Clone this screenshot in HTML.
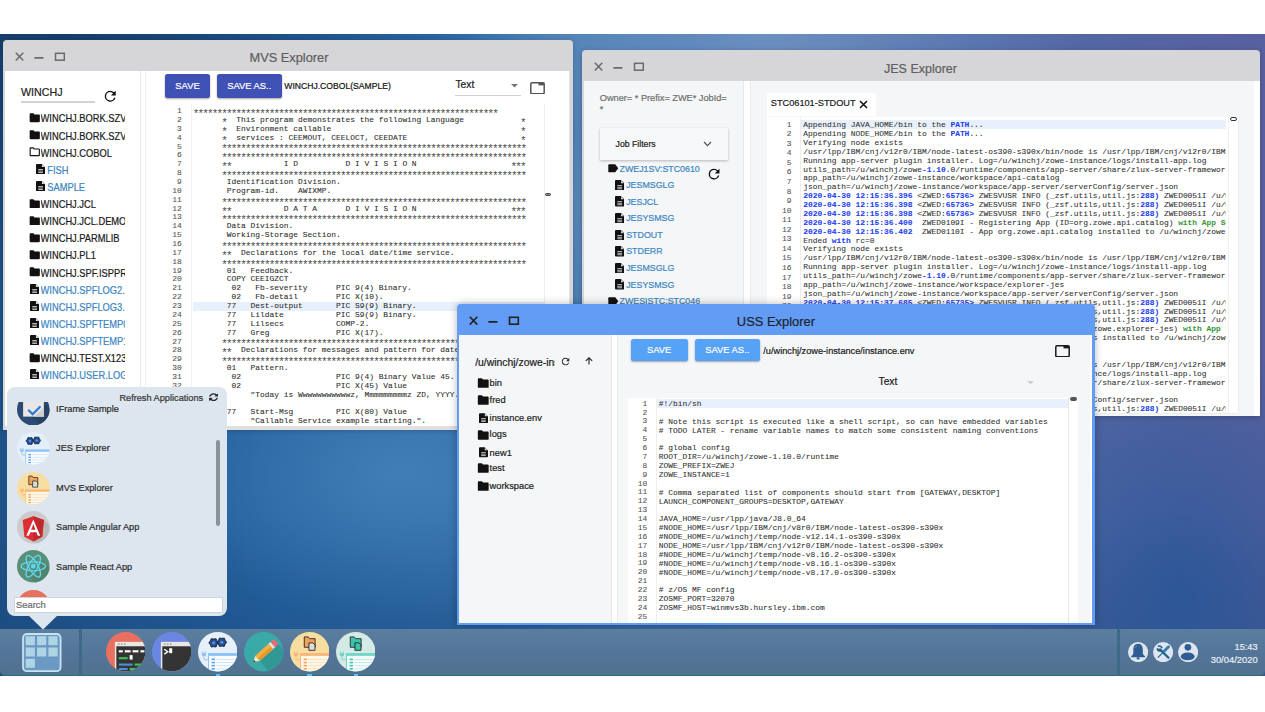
<!DOCTYPE html><html><head><meta charset="utf-8"><style>
*{box-sizing:border-box;margin:0;padding:0}
html,body{width:1265px;height:712px;overflow:hidden;background:#fff}
body{position:relative;font-family:"Liberation Sans",sans-serif;color:#111;-webkit-text-stroke:0.2px currentColor}
.mono{-webkit-text-stroke:0.08px currentColor}
.a{position:absolute}
.ov{overflow:hidden}
.mono{font-family:"Liberation Mono",monospace;white-space:pre}
.nw{white-space:nowrap}
.ast{display:inline-block;height:8.86px;vertical-align:top;font-size:11px;letter-spacing:-1.848px;position:relative;top:2.9px;left:-0.92px;font-weight:normal;color:#4a4a4a;-webkit-text-stroke:0}
.cd{-webkit-text-stroke:0.18px currentColor}
</style></head><body><div class="a ov" style="left:0;top:34px;width:1265px;height:642px;background:
radial-gradient(ellipse 200px 260px at 1180px 560px, rgba(35,85,150,0.75), rgba(35,85,150,0) 100%),
radial-gradient(ellipse 260px 150px at 400px 440px, rgba(85,145,198,0.55), rgba(85,145,198,0) 100%),
radial-gradient(ellipse 130px 330px at 578px 160px, rgba(120,160,200,0.45), rgba(120,160,200,0) 100%),
linear-gradient(180deg, rgba(20,60,110,0) 75%, rgba(20,60,110,0.35) 100%),
radial-gradient(ellipse 330px 120px at 760px 0px, rgba(140,175,215,0.45), rgba(140,175,215,0) 100%),
radial-gradient(ellipse 420px 260px at 60px 0px, rgba(20,55,100,0.85), rgba(20,55,100,0) 100%),
linear-gradient(90deg,#1f5288 0%,#2462a0 22%,#2f6aa5 40%,#4574ad 52%,#5276ad 62%,#5169a6 80%,#58609f 100%)">
</div>
<div class="a ov" style="left:3px;top:40px;width:570px;height:390px;background:#d6d6d9;border-radius:4px 4px 0 0;box-shadow:0 1px 4px rgba(0,0,0,.18)">
<svg class="a" style="left:0;top:0" width="70" height="31" viewBox="0 0 70 31">
<path d="M12.8 12.8 L20.3 20.6 M20.3 12.8 L12.8 20.6" stroke="#6a6a6a" stroke-width="1.5" fill="none"/>
<path d="M31.4 17.9 H40.4" stroke="#6a6a6a" stroke-width="1.7" fill="none"/>
<rect x="52.5" y="13.3" width="8.8" height="6.9" stroke="#6a6a6a" stroke-width="1.5" fill="none"/>
</svg>
<div class="a nw" style="left:0;top:0;width:570px;height:31px;text-align:center;font-size:12.8px;line-height:31px;color:#5e5e5e;padding-top:2.4px;padding-left:2px">MVS Explorer</div>
<div class="a ov" style="left:2px;top:31px;width:564.5px;height:359px;background:#fff;border-right:1px solid #e4e4e4">
<div class="a" style="left:135px;top:0;width:1px;height:357px;background:#e9e9e9"></div>
<div class="a" style="left:140px;top:0;width:1px;height:357px;background:#efefef"></div>
<div class="a nw" style="left:16px;top:14.299999999999997px;font-size:10.7px;line-height:14px;color:#222">WINCHJ</div>
<div class="a" style="left:16px;top:30px;width:74px;height:1.6px;background:#d2d2d2"></div>
<svg class="a" style="left:97.05px;top:17.25px" width="16.5" height="16.5" viewBox="0 0 24 24"><path d="M17.65 6.35A7.958 7.958 0 0 0 12 4a8 8 0 1 0 7.73 10h-2.08A6 6 0 1 1 12 6c1.66 0 3.14.69 4.22 1.78L13 11h7V4l-2.35 2.35z" fill="#111"/></svg>
<svg class="a" style="left:23.9px;top:42.0px" width="11.5" height="9.7" viewBox="0 0 11 9.5"><path d="M0.5 1.2 Q0.5 0.3 1.3 0.3 H4.2 L5.3 1.4 H9.7 Q10.5 1.4 10.5 2.2 V8.2 Q10.5 9 9.7 9 H1.3 Q0.5 9 0.5 8.2 Z" fill="#111"/></svg>
<div class="a ov nw" style="left:35.6px;top:42.39999999999999px;width:84.4px;height:12px;font-size:9.3px;line-height:12px;color:#1a1a1a;transform:scaleY(1.14)">WINCHJ.BORK.SZVIPERS</div>
<svg class="a" style="left:23.9px;top:59.129999999999995px" width="11.5" height="9.7" viewBox="0 0 11 9.5"><path d="M0.5 1.2 Q0.5 0.3 1.3 0.3 H4.2 L5.3 1.4 H9.7 Q10.5 1.4 10.5 2.2 V8.2 Q10.5 9 9.7 9 H1.3 Q0.5 9 0.5 8.2 Z" fill="#111"/></svg>
<div class="a ov nw" style="left:35.6px;top:59.53px;width:84.4px;height:12px;font-size:9.3px;line-height:12px;color:#1a1a1a;transform:scaleY(1.14)">WINCHJ.BORK.SZVIPERS2</div>
<svg class="a" style="left:23.9px;top:76.25999999999999px" width="11.5" height="9.7" viewBox="0 0 11 9.5"><path d="M1 1.2 Q1 0.8 1.4 0.8 H4 L5 1.9 H9.6 Q10 1.9 10 2.3 V8.1 Q10 8.5 9.6 8.5 H1.4 Q1 8.5 1 8.1 Z" fill="none" stroke="#111" stroke-width="1.1"/></svg>
<div class="a ov nw" style="left:35.6px;top:76.66px;width:84.4px;height:12px;font-size:9.3px;line-height:12px;color:#1a1a1a;transform:scaleY(1.14)">WINCHJ.COBOL</div>
<svg class="a" style="left:31.299999999999997px;top:92.69px" width="9.2" height="10.2" viewBox="0 0 9 10"><path d="M1 0 H5.6 L9 3.3 V9 Q9 10 8 10 H1 Q0 10 0 9 V1 Q0 0 1 0 Z" fill="#111"/><path d="M5.8 0.6 V3 H8.3" fill="#fff" opacity="0.9"/><rect x="2.2" y="5" width="4.6" height="0.8" fill="#ddd"/><rect x="2.2" y="6.5" width="4.6" height="0.8" fill="#ddd"/><rect x="2.2" y="8" width="4.6" height="0.8" fill="#ddd"/></svg>
<div class="a ov nw" style="left:42.3px;top:93.78999999999999px;width:77.7px;height:12px;font-size:9.3px;line-height:12px;color:#3d86c2;transform:scaleY(1.14)">FISH</div>
<svg class="a" style="left:31.299999999999997px;top:109.82px" width="9.2" height="10.2" viewBox="0 0 9 10"><path d="M1 0 H5.6 L9 3.3 V9 Q9 10 8 10 H1 Q0 10 0 9 V1 Q0 0 1 0 Z" fill="#111"/><path d="M5.8 0.6 V3 H8.3" fill="#fff" opacity="0.9"/><rect x="2.2" y="5" width="4.6" height="0.8" fill="#ddd"/><rect x="2.2" y="6.5" width="4.6" height="0.8" fill="#ddd"/><rect x="2.2" y="8" width="4.6" height="0.8" fill="#ddd"/></svg>
<div class="a ov nw" style="left:42.3px;top:110.91999999999999px;width:77.7px;height:12px;font-size:9.3px;line-height:12px;color:#3d86c2;transform:scaleY(1.14)">SAMPLE</div>
<svg class="a" style="left:23.9px;top:127.64999999999998px" width="11.5" height="9.7" viewBox="0 0 11 9.5"><path d="M0.5 1.2 Q0.5 0.3 1.3 0.3 H4.2 L5.3 1.4 H9.7 Q10.5 1.4 10.5 2.2 V8.2 Q10.5 9 9.7 9 H1.3 Q0.5 9 0.5 8.2 Z" fill="#111"/></svg>
<div class="a ov nw" style="left:35.6px;top:128.04999999999998px;width:84.4px;height:12px;font-size:9.3px;line-height:12px;color:#1a1a1a;transform:scaleY(1.14)">WINCHJ.JCL</div>
<svg class="a" style="left:23.9px;top:144.77999999999997px" width="11.5" height="9.7" viewBox="0 0 11 9.5"><path d="M0.5 1.2 Q0.5 0.3 1.3 0.3 H4.2 L5.3 1.4 H9.7 Q10.5 1.4 10.5 2.2 V8.2 Q10.5 9 9.7 9 H1.3 Q0.5 9 0.5 8.2 Z" fill="#111"/></svg>
<div class="a ov nw" style="left:35.6px;top:145.17999999999998px;width:84.4px;height:12px;font-size:9.3px;line-height:12px;color:#1a1a1a;transform:scaleY(1.14)">WINCHJ.JCL.DEMOS</div>
<svg class="a" style="left:23.9px;top:161.90999999999997px" width="11.5" height="9.7" viewBox="0 0 11 9.5"><path d="M0.5 1.2 Q0.5 0.3 1.3 0.3 H4.2 L5.3 1.4 H9.7 Q10.5 1.4 10.5 2.2 V8.2 Q10.5 9 9.7 9 H1.3 Q0.5 9 0.5 8.2 Z" fill="#111"/></svg>
<div class="a ov nw" style="left:35.6px;top:162.30999999999997px;width:84.4px;height:12px;font-size:9.3px;line-height:12px;color:#1a1a1a;transform:scaleY(1.14)">WINCHJ.PARMLIB</div>
<svg class="a" style="left:23.9px;top:179.03999999999996px" width="11.5" height="9.7" viewBox="0 0 11 9.5"><path d="M0.5 1.2 Q0.5 0.3 1.3 0.3 H4.2 L5.3 1.4 H9.7 Q10.5 1.4 10.5 2.2 V8.2 Q10.5 9 9.7 9 H1.3 Q0.5 9 0.5 8.2 Z" fill="#111"/></svg>
<div class="a ov nw" style="left:35.6px;top:179.43999999999997px;width:84.4px;height:12px;font-size:9.3px;line-height:12px;color:#1a1a1a;transform:scaleY(1.14)">WINCHJ.PL1</div>
<svg class="a" style="left:23.9px;top:196.16999999999996px" width="11.5" height="9.7" viewBox="0 0 11 9.5"><path d="M0.5 1.2 Q0.5 0.3 1.3 0.3 H4.2 L5.3 1.4 H9.7 Q10.5 1.4 10.5 2.2 V8.2 Q10.5 9 9.7 9 H1.3 Q0.5 9 0.5 8.2 Z" fill="#111"/></svg>
<div class="a ov nw" style="left:35.6px;top:196.57px;width:84.4px;height:12px;font-size:9.3px;line-height:12px;color:#1a1a1a;transform:scaleY(1.14)">WINCHJ.SPF.ISPPROF</div>
<svg class="a" style="left:24.8px;top:212.59999999999997px" width="9.2" height="10.2" viewBox="0 0 9 10"><path d="M1 0 H5.6 L9 3.3 V9 Q9 10 8 10 H1 Q0 10 0 9 V1 Q0 0 1 0 Z" fill="#111"/><path d="M5.8 0.6 V3 H8.3" fill="#fff" opacity="0.9"/><rect x="2.2" y="5" width="4.6" height="0.8" fill="#ddd"/><rect x="2.2" y="6.5" width="4.6" height="0.8" fill="#ddd"/><rect x="2.2" y="8" width="4.6" height="0.8" fill="#ddd"/></svg>
<div class="a ov nw" style="left:35.6px;top:213.7px;width:84.4px;height:12px;font-size:9.3px;line-height:12px;color:#3d86c2;transform:scaleY(1.14)">WINCHJ.SPFLOG2.LIST</div>
<svg class="a" style="left:24.8px;top:229.72999999999996px" width="9.2" height="10.2" viewBox="0 0 9 10"><path d="M1 0 H5.6 L9 3.3 V9 Q9 10 8 10 H1 Q0 10 0 9 V1 Q0 0 1 0 Z" fill="#111"/><path d="M5.8 0.6 V3 H8.3" fill="#fff" opacity="0.9"/><rect x="2.2" y="5" width="4.6" height="0.8" fill="#ddd"/><rect x="2.2" y="6.5" width="4.6" height="0.8" fill="#ddd"/><rect x="2.2" y="8" width="4.6" height="0.8" fill="#ddd"/></svg>
<div class="a ov nw" style="left:35.6px;top:230.82999999999998px;width:84.4px;height:12px;font-size:9.3px;line-height:12px;color:#3d86c2;transform:scaleY(1.14)">WINCHJ.SPFLOG3.LIST</div>
<svg class="a" style="left:24.8px;top:246.86px" width="9.2" height="10.2" viewBox="0 0 9 10"><path d="M1 0 H5.6 L9 3.3 V9 Q9 10 8 10 H1 Q0 10 0 9 V1 Q0 0 1 0 Z" fill="#111"/><path d="M5.8 0.6 V3 H8.3" fill="#fff" opacity="0.9"/><rect x="2.2" y="5" width="4.6" height="0.8" fill="#ddd"/><rect x="2.2" y="6.5" width="4.6" height="0.8" fill="#ddd"/><rect x="2.2" y="8" width="4.6" height="0.8" fill="#ddd"/></svg>
<div class="a ov nw" style="left:35.6px;top:247.96000000000004px;width:84.4px;height:12px;font-size:9.3px;line-height:12px;color:#3d86c2;transform:scaleY(1.14)">WINCHJ.SPFTEMP0.CNTL</div>
<svg class="a" style="left:24.8px;top:263.99px" width="9.2" height="10.2" viewBox="0 0 9 10"><path d="M1 0 H5.6 L9 3.3 V9 Q9 10 8 10 H1 Q0 10 0 9 V1 Q0 0 1 0 Z" fill="#111"/><path d="M5.8 0.6 V3 H8.3" fill="#fff" opacity="0.9"/><rect x="2.2" y="5" width="4.6" height="0.8" fill="#ddd"/><rect x="2.2" y="6.5" width="4.6" height="0.8" fill="#ddd"/><rect x="2.2" y="8" width="4.6" height="0.8" fill="#ddd"/></svg>
<div class="a ov nw" style="left:35.6px;top:265.09000000000003px;width:84.4px;height:12px;font-size:9.3px;line-height:12px;color:#3d86c2;transform:scaleY(1.14)">WINCHJ.SPFTEMP1.CNTL</div>
<svg class="a" style="left:23.9px;top:281.82px" width="11.5" height="9.7" viewBox="0 0 11 9.5"><path d="M0.5 1.2 Q0.5 0.3 1.3 0.3 H4.2 L5.3 1.4 H9.7 Q10.5 1.4 10.5 2.2 V8.2 Q10.5 9 9.7 9 H1.3 Q0.5 9 0.5 8.2 Z" fill="#111"/></svg>
<div class="a ov nw" style="left:35.6px;top:282.22px;width:84.4px;height:12px;font-size:9.3px;line-height:12px;color:#1a1a1a;transform:scaleY(1.14)">WINCHJ.TEST.X123</div>
<svg class="a" style="left:24.8px;top:298.25px" width="9.2" height="10.2" viewBox="0 0 9 10"><path d="M1 0 H5.6 L9 3.3 V9 Q9 10 8 10 H1 Q0 10 0 9 V1 Q0 0 1 0 Z" fill="#111"/><path d="M5.8 0.6 V3 H8.3" fill="#fff" opacity="0.9"/><rect x="2.2" y="5" width="4.6" height="0.8" fill="#ddd"/><rect x="2.2" y="6.5" width="4.6" height="0.8" fill="#ddd"/><rect x="2.2" y="8" width="4.6" height="0.8" fill="#ddd"/></svg>
<div class="a ov nw" style="left:35.6px;top:299.35px;width:84.4px;height:12px;font-size:9.3px;line-height:12px;color:#3d86c2;transform:scaleY(1.14)">WINCHJ.USER.LOG</div>
<div class="a nw" style="left:160px;top:3.200000000000003px;width:45px;height:23.4px;background:#3f51b5;border-radius:2.5px;box-shadow:0 1px 2px rgba(0,0,0,.35);color:#fff;font-size:9.4px;line-height:23.4px;text-align:center">SAVE</div>
<div class="a nw" style="left:211.7px;top:3.200000000000003px;width:65px;height:23.4px;background:#3f51b5;border-radius:2.5px;box-shadow:0 1px 2px rgba(0,0,0,.35);color:#fff;font-size:9.4px;line-height:23.4px;text-align:center">SAVE AS..</div>
<div class="a nw" style="left:279.3px;top:9px;font-size:8.6px;line-height:12px;color:#111">WINCHJ.COBOL(SAMPLE)</div>
<div class="a nw" style="left:450.4px;top:7px;font-size:10.3px;line-height:13px;color:#222">Text</div>
<div class="a" style="left:450.4px;top:24.299999999999997px;width:66px;height:1.2px;background:#d2d2d2"></div>
<svg class="a" style="left:505.5px;top:12.799999999999997px" width="7" height="4" viewBox="0 0 7 4"><path d="M0 0 H7 L3.5 3.5Z" fill="#777"/></svg>
<svg class="a" style="left:525px;top:10.5px" width="15" height="12.5" viewBox="0 0 15 12.5"><rect x="0.8" y="0.8" width="13.4" height="10.9" rx="1.2" fill="none" stroke="#555" stroke-width="1.5"/><rect x="8.5" y="0.8" width="5.7" height="2.6" fill="#555"/></svg>
<div class="a" style="left:538.8px;top:32.5px;width:1px;height:330px;background:#ececec"></div>
<div class="a" style="left:186.2px;top:32.5px;width:1px;height:330px;background:#f0f0f0"></div>
<div class="a" style="left:540px;top:122px;width:6.4px;height:3.2px;border:1.1px solid #3a3d42;background:#8c929a;border-radius:2px"></div>
<div class="a" style="left:187.7px;top:231.08999999999997px;width:351.09999999999997px;height:8.86px;background:#e8f0fb"></div>
<div class="a ov" style="left:188.6px;top:36.16999999999999px;width:350.19999999999993px;height:318.4px"><div class="mono" style="font-size:7.92px;line-height:8.86px;color:#2e2e2e"><span class="ast">****************************************************************</span>
      <span class="ast">*</span>  This program demonstrates the following Language            <span class="ast">*</span>
      <span class="ast">*</span>  Environment callable                                        <span class="ast">*</span>
      <span class="ast">*</span>  services : CEEMOUT, CEELOCT, CEEDATE                        <span class="ast">*</span>
      <span class="ast">****************************************************************</span>
      <span class="ast">****************************************************************</span>
      <span class="ast">**</span>           I D          D I V I S I O N                    <span class="ast">***</span>
      <span class="ast">****************************************************************</span>
       Identification Division.
       Program-id.    AWIXMP.
      <span class="ast">****************************************************************</span>
      <span class="ast">**</span>           D A T A      D I V I S I O N                    <span class="ast">***</span>
      <span class="ast">****************************************************************</span>
       Data Division.
       Working-Storage Section.
      <span class="ast">****************************************************************</span>
      <span class="ast">**</span>  Declarations for the local date/time service.
      <span class="ast">****************************************************************</span>
       01   Feedback.
       COPY CEEIGZCT
        02   Fb-severity      PIC 9(4) Binary.
        02   Fb-detail        PIC X(10).
       77   Dest-output       PIC S9(9) Binary.
       77   Lildate           PIC S9(9) Binary.
       77   Lilsecs           COMP-2.
       77   Greg              PIC X(17).
      <span class="ast">****************************************************************</span>
      <span class="ast">**</span>  Declarations for messages and pattern for date formatting.
      <span class="ast">****************************************************************</span>
       01   Pattern.
        02                    PIC 9(4) Binary Value 45.
        02                    PIC X(45) Value
            "Today is Wwwwwwwwwwwz, Mmmmmmmmmz ZD, YYYY."

       77   Start-Msg         PIC X(80) Value
            "Callable Service example starting.".

       77   Stop-Msg          PIC X(80) Value</div></div>
<div class="a mono" style="left:155px;top:36.16999999999999px;width:21.80000000000001px;text-align:right;font-size:7.92px;line-height:8.86px;color:#555">1
2
3
4
5
6
7
8
9
10
11
12
13
14
15
16
17
18
19
20
21
22
23
24
25
26
27
28
29
30
31
32
33
34
35
36
37
38</div>
<div class="a" style="left:0;top:355px;width:566.5px;height:4px;background:#e0e0e0"></div>
</div>
</div>
<div class="a ov" style="left:582px;top:50px;width:678px;height:366px;background:#d6d6d9;border-radius:4px 4px 0 0;box-shadow:0 1px 5px rgba(0,0,0,.22)">
<svg class="a" style="left:0;top:0" width="70" height="31" viewBox="0 0 70 31">
<path d="M12.8 12.8 L20.3 20.6 M20.3 12.8 L12.8 20.6" stroke="#6a6a6a" stroke-width="1.5" fill="none"/>
<path d="M31.4 17.9 H40.4" stroke="#6a6a6a" stroke-width="1.7" fill="none"/>
<rect x="52.5" y="13.3" width="8.8" height="6.9" stroke="#6a6a6a" stroke-width="1.5" fill="none"/>
</svg>
<div class="a nw" style="left:0;top:0;width:678px;height:31px;text-align:center;font-size:12.5px;line-height:31px;color:#5e5e5e;padding-top:3.6px;padding-right:1px">JES Explorer</div>
<div class="a ov" style="left:1.5px;top:31px;width:676.0px;height:335px;background:#fff">
<div class="a" style="left:0;top:0;width:160.5px;height:400px;background:#f4f6f7"></div>
<div class="a" style="left:166.5px;top:0;width:504px;height:400px;background:#f4f6f7"></div>
<div class="a" style="left:159.79999999999995px;top:0;width:1px;height:400px;background:#e6e7e8"></div>
<div class="a" style="left:166.79999999999995px;top:0;width:1px;height:400px;background:#e9eaeb"></div>
<div class="a nw" style="left:16.299999999999955px;top:10.900000000000006px;font-size:9.2px;line-height:12px;color:#707070">Owner= * Prefix= ZWE* JobId=</div>
<div class="a nw" style="left:16.299999999999955px;top:22.200000000000003px;font-size:9.2px;line-height:12px;color:#707070">*</div>
<div class="a" style="left:16.299999999999955px;top:46.8px;width:128.5px;height:32px;background:#f7f8f9;box-shadow:0 1px 2.5px rgba(0,0,0,.26)"></div>
<div class="a nw" style="left:32.10000000000002px;top:56.599999999999994px;font-size:8.7px;line-height:12px;color:#222">Job Filters</div>
<svg class="a" style="left:119.0px;top:60px" width="9" height="6" viewBox="0 0 9 6"><path d="M1 1 L4.5 4.6 L8 1" stroke="#555" stroke-width="1.3" fill="none"/></svg>
<svg class="a" style="left:24.700000000000045px;top:83.30000000000001px" width="11" height="9" viewBox="0 0 11 9"><path d="M1.2 0.3 H7.2 L10.3 4.3 L7.2 8.3 H1.2 Q0.3 8.3 0.3 7.4 V1.2 Q0.3 0.3 1.2 0.3Z" fill="#111"/></svg>
<div class="a ov nw" style="left:36.0px;top:81.5px;width:80.20000000000005px;height:12px;font-size:8.85px;line-height:12px;color:#3d86c2">ZWEJ1SV:STC06101</div>
<svg class="a" style="left:122.4px;top:85.20000000000002px" width="16.2" height="16.2" viewBox="0 0 24 24"><path d="M17.65 6.35A7.958 7.958 0 0 0 12 4a8 8 0 1 0 7.73 10h-2.08A6 6 0 1 1 12 6c1.66 0 3.14.69 4.22 1.78L13 11h7V4l-2.35 2.35z" fill="#111"/></svg>
<svg class="a" style="left:31.399999999999977px;top:98.79999999999998px" width="9.4" height="10.5" viewBox="0 0 9 10"><path d="M1 0 H5.6 L9 3.3 V9 Q9 10 8 10 H1 Q0 10 0 9 V1 Q0 0 1 0 Z" fill="#111"/><path d="M5.8 0.6 V3 H8.3" fill="#fff" opacity="0.9"/><rect x="2.2" y="5" width="4.6" height="0.8" fill="#ddd"/><rect x="2.2" y="6.5" width="4.6" height="0.8" fill="#ddd"/><rect x="2.2" y="8" width="4.6" height="0.8" fill="#ddd"/></svg>
<div class="a nw" style="left:42.700000000000045px;top:98.19999999999999px;font-size:8.85px;line-height:12px;color:#3d86c2">JESMSGLG</div>
<svg class="a" style="left:31.399999999999977px;top:115.36999999999998px" width="9.4" height="10.5" viewBox="0 0 9 10"><path d="M1 0 H5.6 L9 3.3 V9 Q9 10 8 10 H1 Q0 10 0 9 V1 Q0 0 1 0 Z" fill="#111"/><path d="M5.8 0.6 V3 H8.3" fill="#fff" opacity="0.9"/><rect x="2.2" y="5" width="4.6" height="0.8" fill="#ddd"/><rect x="2.2" y="6.5" width="4.6" height="0.8" fill="#ddd"/><rect x="2.2" y="8" width="4.6" height="0.8" fill="#ddd"/></svg>
<div class="a nw" style="left:42.700000000000045px;top:114.76999999999998px;font-size:8.85px;line-height:12px;color:#3d86c2">JESJCL</div>
<svg class="a" style="left:31.399999999999977px;top:131.93999999999997px" width="9.4" height="10.5" viewBox="0 0 9 10"><path d="M1 0 H5.6 L9 3.3 V9 Q9 10 8 10 H1 Q0 10 0 9 V1 Q0 0 1 0 Z" fill="#111"/><path d="M5.8 0.6 V3 H8.3" fill="#fff" opacity="0.9"/><rect x="2.2" y="5" width="4.6" height="0.8" fill="#ddd"/><rect x="2.2" y="6.5" width="4.6" height="0.8" fill="#ddd"/><rect x="2.2" y="8" width="4.6" height="0.8" fill="#ddd"/></svg>
<div class="a nw" style="left:42.700000000000045px;top:131.33999999999997px;font-size:8.85px;line-height:12px;color:#3d86c2">JESYSMSG</div>
<svg class="a" style="left:31.399999999999977px;top:148.51px" width="9.4" height="10.5" viewBox="0 0 9 10"><path d="M1 0 H5.6 L9 3.3 V9 Q9 10 8 10 H1 Q0 10 0 9 V1 Q0 0 1 0 Z" fill="#111"/><path d="M5.8 0.6 V3 H8.3" fill="#fff" opacity="0.9"/><rect x="2.2" y="5" width="4.6" height="0.8" fill="#ddd"/><rect x="2.2" y="6.5" width="4.6" height="0.8" fill="#ddd"/><rect x="2.2" y="8" width="4.6" height="0.8" fill="#ddd"/></svg>
<div class="a nw" style="left:42.700000000000045px;top:147.91px;font-size:8.85px;line-height:12px;color:#3d86c2">STDOUT</div>
<svg class="a" style="left:31.399999999999977px;top:165.07999999999998px" width="9.4" height="10.5" viewBox="0 0 9 10"><path d="M1 0 H5.6 L9 3.3 V9 Q9 10 8 10 H1 Q0 10 0 9 V1 Q0 0 1 0 Z" fill="#111"/><path d="M5.8 0.6 V3 H8.3" fill="#fff" opacity="0.9"/><rect x="2.2" y="5" width="4.6" height="0.8" fill="#ddd"/><rect x="2.2" y="6.5" width="4.6" height="0.8" fill="#ddd"/><rect x="2.2" y="8" width="4.6" height="0.8" fill="#ddd"/></svg>
<div class="a nw" style="left:42.700000000000045px;top:164.48px;font-size:8.85px;line-height:12px;color:#3d86c2">STDERR</div>
<svg class="a" style="left:31.399999999999977px;top:181.64999999999998px" width="9.4" height="10.5" viewBox="0 0 9 10"><path d="M1 0 H5.6 L9 3.3 V9 Q9 10 8 10 H1 Q0 10 0 9 V1 Q0 0 1 0 Z" fill="#111"/><path d="M5.8 0.6 V3 H8.3" fill="#fff" opacity="0.9"/><rect x="2.2" y="5" width="4.6" height="0.8" fill="#ddd"/><rect x="2.2" y="6.5" width="4.6" height="0.8" fill="#ddd"/><rect x="2.2" y="8" width="4.6" height="0.8" fill="#ddd"/></svg>
<div class="a nw" style="left:42.700000000000045px;top:181.04999999999995px;font-size:8.85px;line-height:12px;color:#3d86c2">JESMSGLG</div>
<svg class="a" style="left:31.399999999999977px;top:198.22000000000003px" width="9.4" height="10.5" viewBox="0 0 9 10"><path d="M1 0 H5.6 L9 3.3 V9 Q9 10 8 10 H1 Q0 10 0 9 V1 Q0 0 1 0 Z" fill="#111"/><path d="M5.8 0.6 V3 H8.3" fill="#fff" opacity="0.9"/><rect x="2.2" y="5" width="4.6" height="0.8" fill="#ddd"/><rect x="2.2" y="6.5" width="4.6" height="0.8" fill="#ddd"/><rect x="2.2" y="8" width="4.6" height="0.8" fill="#ddd"/></svg>
<div class="a nw" style="left:42.700000000000045px;top:197.62px;font-size:8.85px;line-height:12px;color:#3d86c2">JESYSMSG</div>
<svg class="a" style="left:24.700000000000045px;top:216px" width="11" height="9" viewBox="0 0 11 9"><path d="M1.2 0.3 H7.2 L10.3 4.3 L7.2 8.3 H1.2 Q0.3 8.3 0.3 7.4 V1.2 Q0.3 0.3 1.2 0.3Z" fill="#111"/></svg>
<div class="a ov nw" style="left:36.0px;top:214px;width:80.20000000000005px;height:12px;font-size:8.85px;line-height:12px;color:#3d86c2">ZWESISTC:STC04611</div>
<div class="a" style="left:183.20000000000005px;top:11.700000000000003px;width:109px;height:23.1px;background:#fff"></div>
<div class="a nw" style="left:187.29999999999995px;top:16.200000000000003px;font-size:9.2px;line-height:12px;color:#222">STC06101-STDOUT</div>
<svg class="a" style="left:275.5px;top:18.5px" width="9" height="9" viewBox="0 0 9 9"><path d="M1 1 L8 8 M8 1 L1 8" stroke="#111" stroke-width="1.5"/></svg>
<div class="a" style="left:183.20000000000005px;top:36.2px;width:471.29999999999995px;height:297.1px;background:#fff;border-bottom:1px solid #ececec"></div>
<div class="a" style="left:644.8px;top:35.599999999999994px;width:1px;height:297.70000000000005px;background:#efefef"></div>
<div class="a" style="left:216.79999999999995px;top:35.599999999999994px;width:1px;height:295.4px;background:#eeeeee"></div>
<div class="a" style="left:654.0px;top:35.599999999999994px;width:1px;height:295.4px;background:#ececec"></div>
<div class="a" style="left:217.29999999999995px;top:38.8px;width:425.5px;height:8.8px;background:#e8f0fd"></div>
<div class="a" style="left:646.5px;top:36.2px;width:6.5px;height:3.4px;border:1.2px solid #333;border-radius:2px"></div>
<div class="a ov" style="left:219.79999999999995px;top:35.599999999999994px;width:423.0px;height:296.70000000000005px"><div class="a mono" style="left:0;top:4.560000000000002px;font-size:7.92px;line-height:8.88px;color:#333">Appending JAVA_HOME/bin to the <span style="color:#1f3ff2;font-weight:bold">PATH</span>...
Appending NODE_HOME/bin to the <span style="color:#1f3ff2;font-weight:bold">PATH</span>...
Verifying node exists
/usr/lpp/IBM/cnj/v12r0/IBM/node-latest-os390-s390x/bin/node is /usr/lpp/IBM/cnj/v12r0/IBM/node-latest
Running app-server plugin installer. Log=/u/winchj/zowe-instance/logs/install-app.log
utils_path=/u/winchj/zowe<span style="color:#1f3ff2;font-weight:bold">-1.10.</span>0/runtime/components/app-server/share/zlux-server-framework/utils
app_path=/u/winchj/zowe-instance/workspace/api-catalog
json_path=/u/winchj/zowe-instance/workspace/app-server/serverConfig/server.json
<span style="color:#1f3ff2;font-weight:bold">2020-04-30 12:15:36.396</span> &lt;ZWED:<span style="color:#1f3ff2;font-weight:bold">65736&gt;</span> ZWESVUSR INFO (_zsf.utils,util.js:<span style="color:#1f3ff2;font-weight:bold">288)</span> ZWED0051I /u/winchj/zowe-instance
<span style="color:#1f3ff2;font-weight:bold">2020-04-30 12:15:36.398</span> &lt;ZWED:<span style="color:#1f3ff2;font-weight:bold">65736&gt;</span> ZWESVUSR INFO (_zsf.utils,util.js:<span style="color:#1f3ff2;font-weight:bold">288)</span> ZWED0051I /u/winchj/zowe-instance
<span style="color:#1f3ff2;font-weight:bold">2020-04-30 12:15:36.398</span> &lt;ZWED:<span style="color:#1f3ff2;font-weight:bold">65736&gt;</span> ZWESVUSR INFO (_zsf.utils,util.js:<span style="color:#1f3ff2;font-weight:bold">288)</span> ZWED0051I /u/winchj/zowe-instance
<span style="color:#1f3ff2;font-weight:bold">2020-04-30 12:15:36.400</span>  ZWED0109I - Registering App (ID=org.zowe.api.catalog) <span style="color:#3c9a3c;font-weight:bold">with App Server</span>
<span style="color:#1f3ff2;font-weight:bold">2020-04-30 12:15:36.402</span>  ZWED0110I - App org.zowe.api.catalog installed to /u/winchj/zowe-instance/workspace
Ended <span style="color:#1f3ff2;font-weight:bold">with</span> rc=0
Verifying node exists
/usr/lpp/IBM/cnj/v12r0/IBM/node-latest-os390-s390x/bin/node is /usr/lpp/IBM/cnj/v12r0/IBM/node-latest
Running app-server plugin installer. Log=/u/winchj/zowe-instance/logs/install-app.log
utils_path=/u/winchj/zowe<span style="color:#1f3ff2;font-weight:bold">-1.10.</span>0/runtime/components/app-server/share/zlux-server-framework/utils
app_path=/u/winchj/zowe-instance/workspace/explorer-jes
json_path=/u/winchj/zowe-instance/workspace/app-server/serverConfig/server.json
<span style="color:#1f3ff2;font-weight:bold">2020-04-30 12:15:37.685</span> &lt;ZWED:<span style="color:#1f3ff2;font-weight:bold">65735&gt;</span> ZWESVUSR INFO (_zsf.utils,util.js:<span style="color:#1f3ff2;font-weight:bold">288)</span> ZWED0051I /u/winchj/zowe-instance
<span style="color:#1f3ff2;font-weight:bold">2020-04-30 12:15:37.687</span> &lt;ZWED:<span style="color:#1f3ff2;font-weight:bold">65735&gt;</span> ZWESVUSR INFO (_zsf.utils,util.js:<span style="color:#1f3ff2;font-weight:bold">288)</span> ZWED0051I /u/winchj/zowe-instance
<span style="color:#1f3ff2;font-weight:bold">2020-04-30 12:15:37.687</span> &lt;ZWED:<span style="color:#1f3ff2;font-weight:bold">65735&gt;</span> ZWESVUSR INFO (_zsf.utils,util.js:<span style="color:#1f3ff2;font-weight:bold">288)</span> ZWED0051I /u/winchj/zowe-instance
<span style="color:#1f3ff2;font-weight:bold">2020-04-30 12:15:37.689</span>  ZWED0109I - Registering App (ID=org.zowe.explorer-jes) <span style="color:#3c9a3c;font-weight:bold">with App Server</span>
<span style="color:#1f3ff2;font-weight:bold">2020-04-30 12:15:37.690</span>  ZWED0110I - App org.zowe.explorer-jes installed to /u/winchj/zowe-instance/workspace
Ended <span style="color:#1f3ff2;font-weight:bold">with</span> rc=0
Verifying node exists
/usr/lpp/IBM/cnj/v12r0/IBM/node-latest-os390-s390x/bin/node is /usr/lpp/IBM/cnj/v12r0/IBM/node-latest
Running app-server plugin installer. Log=/u/winchj/zowe-instance/logs/install-app.log
utils_path=/u/winchj/zowe<span style="color:#1f3ff2;font-weight:bold">-1.10.</span>0/runtime/components/app-server/share/zlux-server-framework/utils
app_path=/u/winchj/zowe-instance/workspace/explorer-mvs
json_path=/u/winchj/zowe-instance/workspace/app-server/serverConfig/server.json
<span style="color:#1f3ff2;font-weight:bold">2020-04-30 12:15:38.901</span> &lt;ZWED:<span style="color:#1f3ff2;font-weight:bold">65734&gt;</span> ZWESVUSR INFO (_zsf.utils,util.js:<span style="color:#1f3ff2;font-weight:bold">288)</span> ZWED0051I /u/winchj/zowe-instance
<span style="color:#1f3ff2;font-weight:bold">2020-04-30 12:15:38.903</span> &lt;ZWED:<span style="color:#1f3ff2;font-weight:bold">65734&gt;</span> ZWESVUSR INFO (_zsf.utils,util.js:<span style="color:#1f3ff2;font-weight:bold">288)</span> ZWED0051I /u/winchj/zowe-instance
<span style="color:#1f3ff2;font-weight:bold">2020-04-30 12:15:38.903</span> &lt;ZWED:<span style="color:#1f3ff2;font-weight:bold">65734&gt;</span> ZWESVUSR INFO (_zsf.utils,util.js:<span style="color:#1f3ff2;font-weight:bold">288)</span> ZWED0051I /u/winchj/zowe-instance
<span style="color:#1f3ff2;font-weight:bold">2020-04-30 12:15:38.905</span>  ZWED0109I - Registering App (ID=org.zowe.explorer-mvs) <span style="color:#3c9a3c;font-weight:bold">with App Server</span>
<span style="color:#1f3ff2;font-weight:bold">2020-04-30 12:15:38.906</span>  ZWED0110I - App org.zowe.explorer-mvs installed to /u/winchj/zowe-instance/workspace
Ended <span style="color:#1f3ff2;font-weight:bold">with</span> rc=0</div></div>
<div class="a ov" style="left:186.5px;top:35.599999999999994px;width:21.600000000000023px;height:295.4px"><div class="a mono" style="left:0;top:3.0200000000000102px;width:21.600000000000023px;text-align:right;font-size:7.92px;line-height:9.56px;color:#555">1
2
3
4
5
6
7
8
9
10
11
12
13
14
15
16
17
18
19
20
21
22
23
24
25
26
27
28
29
30
31
32
33
34
35
36
37
38
39
40</div></div>
</div></div>
<div class="a ov" style="left:457px;top:304px;width:637.8px;height:321.4px;background:#639cf5;border-radius:4px 4px 0 0;box-shadow:0 0 8px rgba(0,0,0,.28)">
<svg class="a" style="left:0;top:0" width="70" height="31" viewBox="0 0 70 31">
<path d="M12.8 12.8 L20.3 20.6 M20.3 12.8 L12.8 20.6" stroke="#222" stroke-width="1.6" fill="none"/>
<path d="M31.4 17.9 H40.4" stroke="#222" stroke-width="1.8" fill="none"/>
<rect x="52.5" y="13.3" width="8.8" height="6.9" stroke="#222" stroke-width="1.6" fill="none"/>
</svg>
<div class="a nw" style="left:0;top:0;width:637.8px;height:31px;text-align:center;font-size:12.9px;line-height:31px;color:#1c2430;padding-top:2px">USS Explorer</div>
<div class="a ov" style="left:2px;top:31px;width:633px;height:288.4px;background:#fff">
<div class="a" style="left:0;top:0;width:152.79999999999995px;height:300px;background:#f4f6f7"></div>
<div class="a" style="left:157.60000000000002px;top:0;width:473.4px;height:300px;background:#f4f6f7"></div>
<div class="a" style="left:152.29999999999995px;top:0;width:1px;height:300px;background:#e4e5e6"></div>
<div class="a" style="left:157.60000000000002px;top:0;width:1px;height:300px;background:#e9eaeb"></div>
<div class="a ov nw" style="left:16.19999999999999px;top:21px;width:79.50000000000006px;height:14px;font-size:10.4px;line-height:14px;color:#222">/u/winchj/zowe-instance</div>
<svg class="a" style="left:101.00000000000003px;top:20.70000000000001px" width="11.2" height="11.2" viewBox="0 0 24 24"><path d="M17.65 6.35A7.958 7.958 0 0 0 12 4a8 8 0 1 0 7.73 10h-2.08A6 6 0 1 1 12 6c1.66 0 3.14.69 4.22 1.78L13 11h7V4l-2.35 2.35z" fill="#333"/></svg>
<svg class="a" style="left:125.60000000000002px;top:22px" width="8" height="8" viewBox="0 0 8 8"><path d="M4 7.6 V0.8 M0.8 3.8 L4 0.8 L7.2 3.8" stroke="#222" stroke-width="1.1" fill="none"/></svg>
<svg class="a" style="left:18.30000000000001px;top:43.19999999999999px" width="12.5" height="10.3" viewBox="0 0 11 9.5"><path d="M0.5 1.2 Q0.5 0.3 1.3 0.3 H4.2 L5.3 1.4 H9.7 Q10.5 1.4 10.5 2.2 V8.2 Q10.5 9 9.7 9 H1.3 Q0.5 9 0.5 8.2 Z" fill="#111"/></svg>
<div class="a nw" style="left:30.600000000000023px;top:41.89999999999998px;font-size:9.3px;line-height:12px;color:#222">bin</div>
<svg class="a" style="left:18.30000000000001px;top:60.10000000000002px" width="12.5" height="10.3" viewBox="0 0 11 9.5"><path d="M0.5 1.2 Q0.5 0.3 1.3 0.3 H4.2 L5.3 1.4 H9.7 Q10.5 1.4 10.5 2.2 V8.2 Q10.5 9 9.7 9 H1.3 Q0.5 9 0.5 8.2 Z" fill="#111"/></svg>
<div class="a nw" style="left:30.600000000000023px;top:58.80000000000001px;font-size:9.3px;line-height:12px;color:#222">fred</div>
<svg class="a" style="left:19.899999999999977px;top:77.60000000000002px" width="9" height="10.5" viewBox="0 0 9 10"><path d="M1 0 H5.6 L9 3.3 V9 Q9 10 8 10 H1 Q0 10 0 9 V1 Q0 0 1 0 Z" fill="#111"/><path d="M5.8 0.6 V3 H8.3" fill="#fff" opacity="0.9"/><rect x="2.2" y="5" width="4.6" height="0.8" fill="#ddd"/><rect x="2.2" y="6.5" width="4.6" height="0.8" fill="#ddd"/><rect x="2.2" y="8" width="4.6" height="0.8" fill="#ddd"/></svg>
<div class="a nw" style="left:30.600000000000023px;top:77.10000000000002px;font-size:9.3px;line-height:12px;color:#222">instance.env</div>
<svg class="a" style="left:18.30000000000001px;top:94.69999999999999px" width="12.5" height="10.3" viewBox="0 0 11 9.5"><path d="M0.5 1.2 Q0.5 0.3 1.3 0.3 H4.2 L5.3 1.4 H9.7 Q10.5 1.4 10.5 2.2 V8.2 Q10.5 9 9.7 9 H1.3 Q0.5 9 0.5 8.2 Z" fill="#111"/></svg>
<div class="a nw" style="left:30.600000000000023px;top:93.39999999999998px;font-size:9.3px;line-height:12px;color:#222">logs</div>
<svg class="a" style="left:19.899999999999977px;top:112.10000000000002px" width="9" height="10.5" viewBox="0 0 9 10"><path d="M1 0 H5.6 L9 3.3 V9 Q9 10 8 10 H1 Q0 10 0 9 V1 Q0 0 1 0 Z" fill="#111"/><path d="M5.8 0.6 V3 H8.3" fill="#fff" opacity="0.9"/><rect x="2.2" y="5" width="4.6" height="0.8" fill="#ddd"/><rect x="2.2" y="6.5" width="4.6" height="0.8" fill="#ddd"/><rect x="2.2" y="8" width="4.6" height="0.8" fill="#ddd"/></svg>
<div class="a nw" style="left:30.600000000000023px;top:111.60000000000002px;font-size:9.3px;line-height:12px;color:#222">new1</div>
<svg class="a" style="left:18.30000000000001px;top:128.40000000000003px" width="12.5" height="10.3" viewBox="0 0 11 9.5"><path d="M0.5 1.2 Q0.5 0.3 1.3 0.3 H4.2 L5.3 1.4 H9.7 Q10.5 1.4 10.5 2.2 V8.2 Q10.5 9 9.7 9 H1.3 Q0.5 9 0.5 8.2 Z" fill="#111"/></svg>
<div class="a nw" style="left:30.600000000000023px;top:127.10000000000002px;font-size:9.3px;line-height:12px;color:#222">test</div>
<svg class="a" style="left:18.30000000000001px;top:145.8px" width="12.5" height="10.3" viewBox="0 0 11 9.5"><path d="M0.5 1.2 Q0.5 0.3 1.3 0.3 H4.2 L5.3 1.4 H9.7 Q10.5 1.4 10.5 2.2 V8.2 Q10.5 9 9.7 9 H1.3 Q0.5 9 0.5 8.2 Z" fill="#111"/></svg>
<div class="a nw" style="left:30.600000000000023px;top:144.5px;font-size:9.3px;line-height:12px;color:#222">workspace</div>
<div class="a nw" style="left:171.60000000000002px;top:3.5px;width:57px;height:22.8px;background:#55a2f6;border-radius:2.5px;box-shadow:0 1px 2px rgba(0,0,0,.35);color:#fff;font-size:9.4px;line-height:22.8px;text-align:center">SAVE</div>
<div class="a nw" style="left:235.70000000000005px;top:3.5px;width:65.2px;height:22.8px;background:#55a2f6;border-radius:2.5px;box-shadow:0 1px 2px rgba(0,0,0,.35);color:#fff;font-size:9.4px;line-height:22.8px;text-align:center">SAVE AS..</div>
<div class="a nw" style="left:304.29999999999995px;top:9.600000000000023px;font-size:9.2px;line-height:12px;color:#1a1a1a">/u/winchj/zowe-instance/instance.env</div>
<svg class="a" style="left:595.7px;top:9.5px" width="15" height="12.5" viewBox="0 0 15 12.5"><rect x="0.8" y="0.8" width="13.4" height="10.9" rx="1.2" fill="none" stroke="#1a1a1a" stroke-width="1.5"/><rect x="8.5" y="0.8" width="5.7" height="2.6" fill="#1a1a1a"/></svg>
<div class="a nw" style="left:419.6px;top:39.5px;font-size:10.2px;line-height:13px;color:#222">Text</div>
<svg class="a" style="left:568px;top:46px" width="7" height="4" viewBox="0 0 7 4"><path d="M0 0 H7 L3.5 3.5Z" fill="#cfcfcf"/></svg>
<div class="a" style="left:168.79999999999995px;top:62.80000000000001px;width:450.20000000000005px;height:225.2px;background:#fff"></div>
<div class="a" style="left:196.89999999999998px;top:62.80000000000001px;width:1px;height:225.2px;background:#eeeeee"></div>
<div class="a" style="left:609.4000000000001px;top:62.80000000000001px;width:1px;height:225.2px;background:#e6e6e6"></div>
<div class="a" style="left:197.5px;top:64px;width:411.70000000000005px;height:8.9px;background:#e8f0fd"></div>
<div class="a" style="left:611px;top:62.30000000000001px;width:7px;height:3.4px;background:#555;border-radius:2px"></div>
<div class="a ov" style="left:199.70000000000005px;top:62.80000000000001px;width:409.29999999999995px;height:225.59999999999997px"><div class="a mono" style="left:0;top:2.265000000000009px;font-size:7.92px;line-height:8.87px;color:#333">#!/bin/sh

# Note this script is executed like a shell script, so can have embedded variables
# TODO LATER - rename variable names to match some consistent naming conventions

# global config
ROOT_DIR=/u/winchj/zowe-1.10.0/runtime
ZOWE_PREFIX=ZWEJ
ZOWE_INSTANCE=1

# Comma separated list of components should start from [GATEWAY,DESKTOP]
LAUNCH_COMPONENT_GROUPS=DESKTOP,GATEWAY

JAVA_HOME=/usr/lpp/java/J8.0_64
#NODE_HOME=/usr/lpp/IBM/cnj/v8r0/IBM/node-latest-os390-s390x
#NODE_HOME=/u/winchj/temp/node-v12.14.1-os390-s390x
NODE_HOME=/usr/lpp/IBM/cnj/v12r0/IBM/node-latest-os390-s390x
#NODE_HOME=/u/winchj/temp/node-v8.16.2-os390-s390x
#NODE_HOME=/u/winchj/temp/node-v8.16.1-os390-s390x
#NODE_HOME=/u/winchj/temp/node-v8.17.0-os390-s390x

# z/OS MF config
ZOSMF_PORT=32070
ZOSMF_HOST=winmvs3b.hursley.ibm.com

ZOWE_EXPLORER_HOST=winmvs3b.hursley.ibm.com
ZOWE_IP_ADDRESS=9.20.5.48</div></div>
<div class="a ov" style="left:169px;top:62.80000000000001px;width:19.200000000000045px;height:225.2px"><div class="a mono" style="left:0;top:1.865000000000009px;width:19.200000000000045px;text-align:right;font-size:7.92px;line-height:8.87px;color:#555">1
2
3
4
5
6
7
8
9
10
11
12
13
14
15
16
17
18
19
20
21
22
23
24
25
26
27</div></div>
</div></div>
<div class="a" style="left:0;top:628.8px;width:1265px;height:47.6px;background:linear-gradient(#5b7e9e,#54759a 50%,#51718f);border-bottom:1px solid #2e6a82;border-radius:0 0 5px 5px"></div>
<div class="a" style="left:79px;top:628.8px;width:3px;height:47px;background:#3f6a86"></div>
<div class="a" style="left:1116.5px;top:628.8px;width:3px;height:47px;background:#3f6a86"></div>
<svg class="a" style="left:22.1px;top:633.4px" width="39.6" height="39.2" viewBox="0 0 39.6 39.2"><rect x="1" y="1" width="37.6" height="37.2" rx="4" fill="#6b99c4" stroke="#c8e2ef" stroke-width="1.8"/><rect x="3.7" y="3.2" width="9.2" height="9" fill="#afd4e4"/><rect x="15.05" y="3.2" width="9.2" height="9" fill="#afd4e4"/><rect x="26.4" y="3.2" width="9.2" height="9" fill="#afd4e4"/><rect x="3.7" y="14.5" width="9.2" height="9" fill="#afd4e4"/><rect x="15.05" y="14.5" width="9.2" height="9" fill="#afd4e4"/><rect x="26.4" y="14.5" width="9.2" height="9" fill="#afd4e4"/><rect x="3.7" y="25.8" width="9.2" height="9" fill="#afd4e4"/></svg>
<svg class="a" style="left:106.0px;top:632.3px" width="39.4" height="39.4" viewBox="0 0 40 40">
<defs><clipPath id="c125"><circle cx="20" cy="20" r="20"/></clipPath></defs>
<circle cx="20" cy="20" r="20" fill="#e9705f"/>
<g clip-path="url(#c125)">
<rect x="9" y="10" width="36" height="36" fill="#e9e6e3"/>
<rect x="10.5" y="14.5" width="34" height="30" fill="#343434"/>
<circle cx="13" cy="12.3" r="0.9" fill="#999"/><circle cx="16" cy="12.3" r="0.9" fill="#999"/><circle cx="19" cy="12.3" r="0.9" fill="#999"/>
<rect x="13" y="18.5" width="4" height="2.2" fill="#fff"/><rect x="19" y="18.5" width="6" height="2.2" fill="#fff"/><rect x="27" y="18.5" width="6" height="2.2" fill="#fff"/><rect x="35" y="18.5" width="4" height="2.2" fill="#fff"/>
<rect x="13" y="25.5" width="9" height="2.2" fill="#3fbf5a"/><rect x="24" y="23.5" width="3" height="4.5" fill="#fff"/>
<rect x="13" y="32" width="14" height="2.2" fill="#4a8fd8"/><rect x="29" y="32" width="8" height="2.2" fill="#3fbf5a"/>
<rect x="13" y="36.5" width="9" height="2.2" fill="#4a8fd8"/><rect x="24" y="36.5" width="6" height="2.2" fill="#3fbf5a"/>
</g></svg>
<svg class="a" style="left:151.8px;top:632.3px" width="39.4" height="39.4" viewBox="0 0 40 40">
<defs><clipPath id="c171"><circle cx="20" cy="20" r="20"/></clipPath></defs>
<circle cx="20" cy="20" r="20" fill="#6886e2"/>
<g clip-path="url(#c171)">
<rect x="9" y="10" width="36" height="36" fill="#e9e6e3"/>
<rect x="10.5" y="14.5" width="34" height="30" fill="#343434"/>
<circle cx="13" cy="12.3" r="0.9" fill="#999"/><circle cx="16" cy="12.3" r="0.9" fill="#999"/><circle cx="19" cy="12.3" r="0.9" fill="#999"/>
<path d="M12.5 17.5 L16 20 L12.5 22.5" stroke="#fff" stroke-width="1.4" fill="none"/><rect x="17.5" y="16.5" width="3" height="5" fill="#fff"/>
</g></svg>
<svg class="a" style="left:198.0px;top:632.3px" width="39.4" height="39.4" viewBox="0 0 40 40">
<defs><clipPath id="l2177_6520"><circle cx="20" cy="20" r="20"/></clipPath></defs>
<circle cx="20" cy="20" r="20" fill="#e6f0fb"/>
<g clip-path="url(#l2177_6520)">
<rect x="10.4" y="24" width="31" height="18" fill="#fff" opacity="0.75"/>
<rect x="10.4" y="21.4" width="31" height="2.8" fill="#8cc2f7"/>
<rect x="10.2" y="21.4" width="1" height="18" fill="#8cc2f7"/>
<rect x="13.8" y="27" width="3.4" height="1.6" fill="#5aa2ee"/><rect x="18.5" y="27.6" width="22" height="0.6" fill="#8cc2f7" opacity="0.6"/>
<rect x="13.8" y="30.2" width="3.4" height="1.6" fill="#5aa2ee"/><rect x="18.5" y="30.8" width="22" height="0.6" fill="#8cc2f7" opacity="0.6"/>
<rect x="13.8" y="33.4" width="3.4" height="1.6" fill="#5aa2ee"/><rect x="18.5" y="34" width="22" height="0.6" fill="#8cc2f7" opacity="0.6"/>
<rect x="13.8" y="36.6" width="3.4" height="1.6" fill="#5aa2ee"/><rect x="18.5" y="37.2" width="22" height="0.6" fill="#8cc2f7" opacity="0.6"/>
<path d="M4.6 19.6 V21.2 M7.4 19.6 V21.2" stroke="#8cc2f7" stroke-width="0.9"/>
<path d="M3.8 21.2 H8.2 V23.4 Q8.2 24.6 6 24.6 Q3.8 24.6 3.8 23.4 Z" fill="#8cc2f7"/>
<path d="M6 24.6 V27 Q6 28.2 7.4 28.2 H10.4" stroke="#8cc2f7" stroke-width="0.9" fill="none"/>
<polygon points="20.80,11.00 19.28,12.95 18.35,15.24 15.90,14.90 13.45,15.24 12.52,12.95 11.00,11.00 12.52,9.05 13.45,6.76 15.90,7.10 18.35,6.76 19.28,9.05" fill="#1f4f96" stroke="#111" stroke-width="0.8"/><circle cx="15.9" cy="11" r="1.6" fill="#5c8fd6"/><polygon points="29.10,10.40 27.58,12.35 26.65,14.64 24.20,14.30 21.75,14.64 20.82,12.35 19.30,10.40 20.82,8.45 21.75,6.16 24.20,6.50 26.65,6.16 27.58,8.45" fill="#1f4f96" stroke="#111" stroke-width="0.8"/><circle cx="24.2" cy="10.4" r="1.6" fill="#5c8fd6"/>
</g></svg>
<svg class="a" style="left:244.3px;top:632.3px" width="39.4" height="39.4" viewBox="0 0 40 40">
<defs><clipPath id="pc"><circle cx="20" cy="20" r="20"/></clipPath></defs>
<circle cx="20" cy="20" r="20" fill="#39aaa8"/>
<g clip-path="url(#pc)"><polygon points="16.11,29.23 34.47,11.83 60.00,40.00 40.00,60.00" fill="#2f918f" opacity="0.75"/></g>
<polygon points="11.46,24.00 24.90,12.05 29.55,17.28 16.11,29.23" fill="#f6b13c"/><polygon points="13.78,26.62 27.23,14.66 29.55,17.28 16.11,29.23" fill="#e79a2c"/>
<polygon points="24.90,12.05 27.00,10.19 31.64,15.42 29.55,17.28" fill="#e4e4e4"/><polygon points="27.00,10.19 29.76,7.73 30.89,7.80 34.47,11.83 34.41,12.96 31.64,15.42" fill="#f06b6f"/>
<polygon points="9.30,30.60 11.46,24.00 16.11,29.23" fill="#f7e7c2"/><polygon points="9.30,30.60 10.08,28.17 11.81,30.11" fill="#3a3a3a"/>
</svg>
<svg class="a" style="left:289.7px;top:632.3px" width="39.4" height="39.4" viewBox="0 0 40 40">
<defs><clipPath id="l3094_6520"><circle cx="20" cy="20" r="20"/></clipPath></defs>
<circle cx="20" cy="20" r="20" fill="#f7dea0"/>
<g clip-path="url(#l3094_6520)">
<rect x="10.4" y="24" width="31" height="18" fill="#fff" opacity="0.75"/>
<rect x="10.4" y="21.4" width="31" height="2.8" fill="#f8b77a"/>
<rect x="10.2" y="21.4" width="1" height="18" fill="#f8b77a"/>
<rect x="13.8" y="27" width="3.4" height="1.6" fill="#f4a258"/><rect x="18.5" y="27.6" width="22" height="0.6" fill="#f8b77a" opacity="0.6"/>
<rect x="13.8" y="30.2" width="3.4" height="1.6" fill="#f4a258"/><rect x="18.5" y="30.8" width="22" height="0.6" fill="#f8b77a" opacity="0.6"/>
<rect x="13.8" y="33.4" width="3.4" height="1.6" fill="#f4a258"/><rect x="18.5" y="34" width="22" height="0.6" fill="#f8b77a" opacity="0.6"/>
<rect x="13.8" y="36.6" width="3.4" height="1.6" fill="#f4a258"/><rect x="18.5" y="37.2" width="22" height="0.6" fill="#f8b77a" opacity="0.6"/>
<path d="M4.6 19.6 V21.2 M7.4 19.6 V21.2" stroke="#f8b77a" stroke-width="0.9"/>
<path d="M3.8 21.2 H8.2 V23.4 Q8.2 24.6 6 24.6 Q3.8 24.6 3.8 23.4 Z" fill="#f8b77a"/>
<path d="M6 24.6 V27 Q6 28.2 7.4 28.2 H10.4" stroke="#f8b77a" stroke-width="0.9" fill="none"/>
<path d="M14.5 5 H18.5 L20 6.8 H25.5 V15.5 H14.5 Z" fill="#f4a258" stroke="#222" stroke-width="0.9"/><path d="M19.2 11 H23.2 L25.4 13.2 V18.6 H19.2 Z" fill="#ddd" stroke="#222" stroke-width="0.9"/>
</g></svg>
<svg class="a" style="left:336.0px;top:632.3px" width="39.4" height="39.4" viewBox="0 0 40 40">
<defs><clipPath id="l3557_6520"><circle cx="20" cy="20" r="20"/></clipPath></defs>
<circle cx="20" cy="20" r="20" fill="#d4eae6"/>
<g clip-path="url(#l3557_6520)">
<rect x="10.4" y="24" width="31" height="18" fill="#fff" opacity="0.75"/>
<rect x="10.4" y="21.4" width="31" height="2.8" fill="#6fd6c4"/>
<rect x="10.2" y="21.4" width="1" height="18" fill="#6fd6c4"/>
<rect x="13.8" y="27" width="3.4" height="1.6" fill="#3cc4ad"/><rect x="18.5" y="27.6" width="22" height="0.6" fill="#6fd6c4" opacity="0.6"/>
<rect x="13.8" y="30.2" width="3.4" height="1.6" fill="#3cc4ad"/><rect x="18.5" y="30.8" width="22" height="0.6" fill="#6fd6c4" opacity="0.6"/>
<rect x="13.8" y="33.4" width="3.4" height="1.6" fill="#3cc4ad"/><rect x="18.5" y="34" width="22" height="0.6" fill="#6fd6c4" opacity="0.6"/>
<rect x="13.8" y="36.6" width="3.4" height="1.6" fill="#3cc4ad"/><rect x="18.5" y="37.2" width="22" height="0.6" fill="#6fd6c4" opacity="0.6"/>
<path d="M4.6 19.6 V21.2 M7.4 19.6 V21.2" stroke="#6fd6c4" stroke-width="0.9"/>
<path d="M3.8 21.2 H8.2 V23.4 Q8.2 24.6 6 24.6 Q3.8 24.6 3.8 23.4 Z" fill="#6fd6c4"/>
<path d="M6 24.6 V27 Q6 28.2 7.4 28.2 H10.4" stroke="#6fd6c4" stroke-width="0.9" fill="none"/>
<path d="M14.5 5 H18.5 L20 6.8 H25.5 V15.5 H14.5 Z" fill="#3cc4ad" stroke="#222" stroke-width="0.9"/><path d="M19.2 11 H23.2 L25.4 13.2 V18.6 H19.2 Z" fill="#3cc4ad" stroke="#222" stroke-width="0.9"/>
</g></svg>
<div class="a" style="left:215.5px;top:674px;width:4.4px;height:1.6px;background:#56c3f4"></div>
<div class="a" style="left:307.2px;top:674px;width:4.4px;height:1.6px;background:#56c3f4"></div>
<div class="a" style="left:353.5px;top:674px;width:4.4px;height:1.6px;background:#56c3f4"></div>
<svg class="a" style="left:1127.9px;top:641.8px" width="20.2" height="20.2" viewBox="0 0 20 20"><circle cx="10" cy="10" r="10" fill="#dde6ee"/><path d="M10 1.8 C6.6 1.8 5.3 4.6 5.3 8 V11.2 Q5.3 12.9 3.1 14.2 V15.1 H16.9 V14.2 Q14.7 12.9 14.7 11.2 V8 C14.7 4.6 13.4 1.8 10 1.8Z" fill="#2f5d93"/><ellipse cx="10" cy="16.3" rx="1.6" ry="1.1" fill="#2f5d93"/><path d="M7.2 5.5 Q7.8 4.2 9 3.8" stroke="#8fb0d4" stroke-width="0.6" fill="none"/></svg>
<svg class="a" style="left:1152.9px;top:641.8px" width="20.2" height="20.2" viewBox="0 0 20 20"><circle cx="10" cy="10" r="10" fill="#dde6ee"/><path d="M7.2 7.6 L15.3 15.6" stroke="#22628f" stroke-width="2.3" stroke-linecap="round"/><path d="M3.8 5.6 A3 3 0 0 0 8.6 8.9 L7.6 6.7 L5.6 6.6 Z" fill="#22628f"/><path d="M4.8 4.2 A3 3 0 0 1 8.9 6.2" stroke="#22628f" stroke-width="1.6" fill="none"/><path d="M5 15.2 L11.5 8.7" stroke="#22628f" stroke-width="1.1" stroke-linecap="round"/><path d="M11.2 9 L15.4 4.8" stroke="#3a7bab" stroke-width="2.8" stroke-linecap="round"/></svg>
<svg class="a" style="left:1177.9px;top:641.8px" width="20.2" height="20.2" viewBox="0 0 20 20"><circle cx="10" cy="10" r="10" fill="#dde6ee"/><circle cx="9.8" cy="5.3" r="3.3" fill="#2f5d93"/><ellipse cx="9.6" cy="14.3" rx="6.9" ry="3.8" fill="#2f5d93"/></svg>
<div class="a nw" style="left:1200px;top:640.5px;width:57.6px;text-align:right;font-size:9.2px;line-height:12px;color:#e8eef4">15:43</div>
<div class="a nw" style="left:1190px;top:653.5px;width:67.6px;text-align:right;font-size:9.4px;line-height:12px;color:#e8eef4">30/04/2020</div>
<svg class="a" style="left:0;top:600px" width="80" height="32" viewBox="0 0 80 32"><path d="M28 15 H58 L43 29.5 Z" fill="#dde5ee"/></svg>
<div class="a ov" style="left:7.4px;top:386.5px;width:220px;height:229.5px;background:#dde5ee;border-radius:8px">
<div class="a nw" style="left:112.0px;top:5.0px;font-size:9.2px;line-height:12px;color:#333">Refresh Applications</div>
<svg class="a" style="left:201.79999999999998px;top:6.899999999999977px" width="9" height="8.4" viewBox="0 -60 1536 1656" preserveAspectRatio="none"><path d="M1511 928q0 5-1 7-64 268-268 434.5t-478 166.5q-146 0-282.5-55t-243.5-157l-129 129q-19 19-45 19t-45-19-19-45v-448q0-26 19-45t45-19h448q26 0 45 19t19 45-19 45l-137 137q71 66 161 102t187 36q134 0 250-65t186-179q11-17 53-117 8-23 30-23h192q13 0 22.5 9.5t9.5 22.5zm25-800v448q0 26-19 45t-45 19h-448q-26 0-45-19t-19-45 19-45l138-138q-148-137-349-137-134 0-250 65t-186 179q-11 17-53 117-8 23-30 23h-199q-13 0-22.5-9.5t-9.5-22.5v-7q65-268 270-434.5t480-166.5q146 0 284 55.5t245 156.5l130-129q19-19 45-19t45 19 19 45z" fill="#2a2a2a"/></svg>
<div class="a ov" style="left:0;top:15.300000000000011px;width:220px;height:194.8px">
<svg class="a" style="left:9.7px;top:-9.100000000000012px" width="32.6" height="32.6" viewBox="0 0 40 40">
<defs><clipPath id="ifc"><circle cx="20" cy="20" r="20"/></clipPath></defs>
<circle cx="20" cy="20" r="20" fill="#2c4a72"/>
<g clip-path="url(#ifc)"><path d="M32.5 12 L44 24 V40 H30 L18 30 Z" fill="#23405f" opacity="0.6"/></g>
<rect x="7.5" y="8" width="25.5" height="21" fill="#e9e7e5"/><rect x="7.5" y="8" width="25.5" height="3" fill="#c9c9c9"/>
<path d="M21 29 L33 18 V29 Z" fill="#cfcfcf"/>
<path d="M14.5 21.5 L19.2 26 L28 17.2" stroke="#2a7ad4" stroke-width="2.8" fill="none" stroke-linecap="round"/>
</svg>
<svg class="a" style="left:9.7px;top:30.399999999999988px" width="32.6" height="32.6" viewBox="0 0 40 40">
<defs><clipPath id="l260_466"><circle cx="20" cy="20" r="20"/></clipPath></defs>
<circle cx="20" cy="20" r="20" fill="#e3effb"/>
<g clip-path="url(#l260_466)">
<rect x="10.4" y="24" width="31" height="18" fill="#fff" opacity="0.75"/>
<rect x="10.4" y="21.4" width="31" height="2.8" fill="#8cc2f7"/>
<rect x="10.2" y="21.4" width="1" height="18" fill="#8cc2f7"/>
<rect x="13.8" y="27" width="3.4" height="1.6" fill="#5aa2ee"/><rect x="18.5" y="27.6" width="22" height="0.6" fill="#8cc2f7" opacity="0.6"/>
<rect x="13.8" y="30.2" width="3.4" height="1.6" fill="#5aa2ee"/><rect x="18.5" y="30.8" width="22" height="0.6" fill="#8cc2f7" opacity="0.6"/>
<rect x="13.8" y="33.4" width="3.4" height="1.6" fill="#5aa2ee"/><rect x="18.5" y="34" width="22" height="0.6" fill="#8cc2f7" opacity="0.6"/>
<rect x="13.8" y="36.6" width="3.4" height="1.6" fill="#5aa2ee"/><rect x="18.5" y="37.2" width="22" height="0.6" fill="#8cc2f7" opacity="0.6"/>
<path d="M4.6 19.6 V21.2 M7.4 19.6 V21.2" stroke="#8cc2f7" stroke-width="0.9"/>
<path d="M3.8 21.2 H8.2 V23.4 Q8.2 24.6 6 24.6 Q3.8 24.6 3.8 23.4 Z" fill="#8cc2f7"/>
<path d="M6 24.6 V27 Q6 28.2 7.4 28.2 H10.4" stroke="#8cc2f7" stroke-width="0.9" fill="none"/>
<polygon points="20.80,11.00 19.28,12.95 18.35,15.24 15.90,14.90 13.45,15.24 12.52,12.95 11.00,11.00 12.52,9.05 13.45,6.76 15.90,7.10 18.35,6.76 19.28,9.05" fill="#1f4f96" stroke="#111" stroke-width="0.8"/><circle cx="15.9" cy="11" r="1.6" fill="#5c8fd6"/><polygon points="29.10,10.40 27.58,12.35 26.65,14.64 24.20,14.30 21.75,14.64 20.82,12.35 19.30,10.40 20.82,8.45 21.75,6.16 24.20,6.50 26.65,6.16 27.58,8.45" fill="#1f4f96" stroke="#111" stroke-width="0.8"/><circle cx="24.2" cy="10.4" r="1.6" fill="#5c8fd6"/>
</g></svg>
<svg class="a" style="left:9.7px;top:69.79999999999997px" width="32.6" height="32.6" viewBox="0 0 40 40">
<defs><clipPath id="l260_860"><circle cx="20" cy="20" r="20"/></clipPath></defs>
<circle cx="20" cy="20" r="20" fill="#f7dea0"/>
<g clip-path="url(#l260_860)">
<rect x="10.4" y="24" width="31" height="18" fill="#fff" opacity="0.75"/>
<rect x="10.4" y="21.4" width="31" height="2.8" fill="#f8b77a"/>
<rect x="10.2" y="21.4" width="1" height="18" fill="#f8b77a"/>
<rect x="13.8" y="27" width="3.4" height="1.6" fill="#f4a258"/><rect x="18.5" y="27.6" width="22" height="0.6" fill="#f8b77a" opacity="0.6"/>
<rect x="13.8" y="30.2" width="3.4" height="1.6" fill="#f4a258"/><rect x="18.5" y="30.8" width="22" height="0.6" fill="#f8b77a" opacity="0.6"/>
<rect x="13.8" y="33.4" width="3.4" height="1.6" fill="#f4a258"/><rect x="18.5" y="34" width="22" height="0.6" fill="#f8b77a" opacity="0.6"/>
<rect x="13.8" y="36.6" width="3.4" height="1.6" fill="#f4a258"/><rect x="18.5" y="37.2" width="22" height="0.6" fill="#f8b77a" opacity="0.6"/>
<path d="M4.6 19.6 V21.2 M7.4 19.6 V21.2" stroke="#f8b77a" stroke-width="0.9"/>
<path d="M3.8 21.2 H8.2 V23.4 Q8.2 24.6 6 24.6 Q3.8 24.6 3.8 23.4 Z" fill="#f8b77a"/>
<path d="M6 24.6 V27 Q6 28.2 7.4 28.2 H10.4" stroke="#f8b77a" stroke-width="0.9" fill="none"/>
<path d="M14.5 5 H18.5 L20 6.8 H25.5 V15.5 H14.5 Z" fill="#f4a258" stroke="#222" stroke-width="0.9"/><path d="M19.2 11 H23.2 L25.4 13.2 V18.6 H19.2 Z" fill="#ddd" stroke="#222" stroke-width="0.9"/>
</g></svg>
<svg class="a" style="left:9.7px;top:109.19999999999995px" width="32.6" height="32.6" viewBox="0 0 40 40">
<defs><clipPath id="agc"><circle cx="20" cy="20" r="20"/></clipPath></defs>
<circle cx="20" cy="20" r="20" fill="#cbcbcb"/>
<g clip-path="url(#agc)"><path d="M33 11 L48 26 L36 48 L20 37.5 L31 31.5 Z" fill="#b5b5b5" opacity="0.8"/></g>
<path d="M20 6.5 L33 11 L31 31.5 L20 37.5 L9 31.5 L7 11 Z" fill="#dd2f33"/>
<path d="M20 6.5 L33 11 L31 31.5 L20 37.5 Z" fill="#c3282c"/>
<path d="M20 10.5 L28.5 30.5 H25.5 L23.7 26 H16.3 L14.5 30.5 H11.5 Z M20 16 L17.4 23 H22.6 Z" fill="#fff"/>
</svg>
<svg class="a" style="left:9.7px;top:148.69999999999993px" width="32.6" height="32.6" viewBox="0 0 40 40">
<defs><clipPath id="rtc"><circle cx="20" cy="20" r="20"/></clipPath></defs>
<circle cx="20" cy="20" r="20" fill="#5a8f77"/>
<g clip-path="url(#rtc)"><path d="M30 12 L48 30 L30 48 L12 30 Z" fill="#4d7f68" opacity="0.7"/></g>
<g fill="none" stroke="#5fd6f0" stroke-width="1.6"><ellipse cx="20" cy="20" rx="15" ry="5.5"/><ellipse cx="20" cy="20" rx="15" ry="5.5" transform="rotate(60 20 20)"/><ellipse cx="20" cy="20" rx="15" ry="5.5" transform="rotate(120 20 20)"/></g>
<circle cx="20" cy="20" r="3" fill="#5fd6f0"/>
</svg>
<div class="a" style="left:9.699999999999998px;top:188.10000000000008px;width:32.6px;height:32.6px;border-radius:50%;background:#e8705f"></div>
<div class="a nw" style="left:48.7px;top:1.1999999999999886px;font-size:9.2px;line-height:12px;color:#2a2a2a">IFrame Sample</div>
<div class="a nw" style="left:48.7px;top:40.69999999999999px;font-size:9.2px;line-height:12px;color:#2a2a2a">JES Explorer</div>
<div class="a nw" style="left:48.7px;top:80.09999999999997px;font-size:9.2px;line-height:12px;color:#2a2a2a">MVS Explorer</div>
<div class="a nw" style="left:48.7px;top:119.49999999999994px;font-size:9.2px;line-height:12px;color:#2a2a2a">Sample Angular App</div>
<div class="a nw" style="left:48.7px;top:158.99999999999994px;font-size:9.2px;line-height:12px;color:#2a2a2a">Sample React App</div>
</div>
<div class="a" style="left:208.2px;top:53.5px;width:4.8px;height:86px;background:#8b9199;border-radius:2.4px"></div>
<div class="a" style="left:6.4px;top:210.10000000000002px;width:208.79999999999998px;height:16.2px;background:#fff;border:1px solid #cdd5dc"></div>
<div class="a nw" style="left:8.6px;top:212.20000000000005px;font-size:9.4px;line-height:12px;color:#6a6a6a">Search</div>
</div></body></html>
